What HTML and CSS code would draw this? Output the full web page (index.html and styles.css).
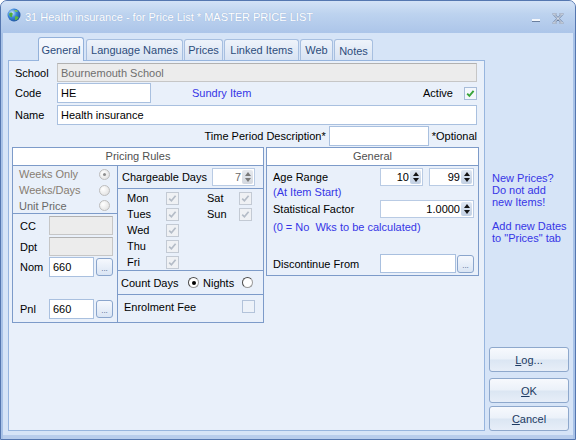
FILE: index.html
```html
<!DOCTYPE html>
<html>
<head>
<meta charset="utf-8">
<link rel="stylesheet" href="styles.css">
</head>
<body>
<div class="window">
  <div class="titlebar">
    <svg class="appicon" width="14" height="14" viewBox="0 0 14 14">
      <defs>
        <radialGradient id="gl" cx="35%" cy="35%" r="75%">
          <stop offset="0" stop-color="#d8ecff"/>
          <stop offset="0.45" stop-color="#3d88d8"/>
          <stop offset="1" stop-color="#1a4b96"/>
        </radialGradient>
      </defs>
      <circle cx="7" cy="7" r="6.5" fill="url(#gl)"/>
      <path d="M2.3 5.6c1.2-1.5 2.9-1.3 3.4-.2.4 1-.8 1.5-.5 2.6.3 1-1 1.6-1.8.8C2.5 8 1.9 6.6 2.3 5.6z" fill="#4fae3b"/>
      <path d="M8 8.6c1-.6 2.7-.4 3.6.6-.4 1.5-1.8 2.8-3.4 3-.6-.9.3-1.6-.2-2.5z" fill="#5cb83f"/>
      <path d="M7.4 2.2c1.3-.3 2.9.2 3.8 1.2-.8.3-1.7 0-2.4.5-.6-.5-1.3-.9-1.4-1.7z" fill="#7cc85a"/>
    </svg>
    <span class="title">31 Health insurance - for Price List * MASTER PRICE LIST</span>
    <span class="minimize"></span>
    <svg class="close" width="12" height="11" viewBox="0 0 12 11">
      <path d="M2 1.5l8 8M10 1.5l-8 8M0.5 1h4M7.5 1h4M0.5 10h4M7.5 10h4" stroke="#6a7f9f" stroke-width="2.2" fill="none"/>
      <path d="M2 1.5l8 8M10 1.5l-8 8M0.5 1h4M7.5 1h4M0.5 10h4M7.5 10h4" stroke="#f4f7fb" stroke-width="1" fill="none"/>
    </svg>
  </div>

  <div class="client">
    <div class="main">
      <div class="tabs">
        <div class="tab active t-gen">General</div>
        <div class="tab t-lang">Language Names</div>
        <div class="tab t-prices">Prices</div>
        <div class="tab t-linked">Linked Items</div>
        <div class="tab t-web">Web</div>
        <div class="tab t-notes">Notes</div>
      </div>

      <div class="panel">
        <div class="row r-school">
          <span class="lbl">School</span>
          <div class="input disabled wide">Bournemouth School</div>
        </div>
        <div class="row r-code">
          <span class="lbl">Code</span>
          <div class="input code">HE</div>
          <span class="blue sundry">Sundry Item</span>
          <span class="active-lbl">Active</span>
          <span class="cb on">
            <svg width="11" height="11" viewBox="0 0 11 11"><path d="M2.2 5.6l2.2 2.2 4.2-5" stroke="#3aa53b" stroke-width="1.9" fill="none"/></svg>
          </span>
        </div>
        <div class="row r-name">
          <span class="lbl">Name</span>
          <div class="input wide">Health insurance</div>
        </div>
        <div class="row r-time">
          <span class="tp-lbl">Time Period Description*</span>
          <div class="input tp"></div>
          <span class="opt">*Optional</span>
        </div>

        <div class="groups">
          <div class="group pricing">
            <div class="ghead">Pricing Rules</div>
            <div class="pbody">
              <div class="pleft">
                <div class="radios">
                  <div class="rrow"><span class="rlbl grey">Weeks Only</span><span class="radio dis sel"></span></div>
                  <div class="rrow"><span class="rlbl grey">Weeks/Days</span><span class="radio dis"></span></div>
                  <div class="rrow last"><span class="rlbl grey2">Unit Price</span><span class="radio dis"></span></div>
                </div>
                <div class="accounts">
                  <div class="arow a-cc"><span class="albl">CC</span><div class="input disabled acc"></div></div>
                  <div class="arow a-dpt"><span class="albl">Dpt</span><div class="input disabled acc"></div></div>
                  <div class="arow a-nom"><span class="albl">Nom</span><div class="input nom">660</div><span class="dots">...</span></div>
                  <div class="arow a-pnl"><span class="albl">Pnl</span><div class="input nom">660</div><span class="dots">...</span></div>
                </div>
              </div>
              <div class="pright">
                <div class="charge">
                  <span>Chargeable Days</span>
                  <div class="spin dspin"><span class="val">7</span><span class="arrows dim"><i class="up"></i><i class="down"></i></span></div>
                </div>
                <div class="days">
                  <div class="drow"><span class="dl">Mon</span><span class="cb dis"><svg width="11" height="11" viewBox="0 0 11 11"><path d="M2.2 5.6l2.2 2.2 4.2-5" stroke="#b4bcc7" stroke-width="1.7" fill="none"/></svg></span><span class="dgap"></span><span class="dl2">Sat</span><span class="cb dis"><svg width="11" height="11" viewBox="0 0 11 11"><path d="M2.2 5.6l2.2 2.2 4.2-5" stroke="#b4bcc7" stroke-width="1.7" fill="none"/></svg></span></div>
                  <div class="drow"><span class="dl">Tues</span><span class="cb dis"><svg width="11" height="11" viewBox="0 0 11 11"><path d="M2.2 5.6l2.2 2.2 4.2-5" stroke="#b4bcc7" stroke-width="1.7" fill="none"/></svg></span><span class="dgap"></span><span class="dl2">Sun</span><span class="cb dis"><svg width="11" height="11" viewBox="0 0 11 11"><path d="M2.2 5.6l2.2 2.2 4.2-5" stroke="#b4bcc7" stroke-width="1.7" fill="none"/></svg></span></div>
                  <div class="drow"><span class="dl">Wed</span><span class="cb dis"><svg width="11" height="11" viewBox="0 0 11 11"><path d="M2.2 5.6l2.2 2.2 4.2-5" stroke="#b4bcc7" stroke-width="1.7" fill="none"/></svg></span></div>
                  <div class="drow"><span class="dl">Thu</span><span class="cb dis"><svg width="11" height="11" viewBox="0 0 11 11"><path d="M2.2 5.6l2.2 2.2 4.2-5" stroke="#b4bcc7" stroke-width="1.7" fill="none"/></svg></span></div>
                  <div class="drow"><span class="dl">Fri</span><span class="cb dis"><svg width="11" height="11" viewBox="0 0 11 11"><path d="M2.2 5.6l2.2 2.2 4.2-5" stroke="#b4bcc7" stroke-width="1.7" fill="none"/></svg></span></div>
                </div>
                <div class="count">
                  <span class="cd-lbl">Count Days</span><span class="radio on sel"></span>
                  <span class="nights">Nights</span><span class="radio on"></span>
                </div>
                <div class="enrol">
                  <span class="en-lbl">Enrolment Fee</span><span class="cb empty"></span>
                </div>
              </div>
            </div>
          </div>

          <div class="group general">
            <div class="ghead">General</div>
            <div class="gbody">
              <div class="grow g-age">
                <span class="glbl">Age Range</span>
                <div class="spin s-age1"><span class="val">10</span><span class="arrows"><i class="up"></i><i class="down"></i></span></div>
                <div class="spin s-age2"><span class="val">99</span><span class="arrows"><i class="up"></i><i class="down"></i></span></div>
              </div>
              <div class="grow g-note1 blue">(At Item Start)</div>
              <div class="grow g-stat">
                <span class="glbl">Statistical Factor</span>
                <div class="spin s-stat"><span class="val">1.0000</span><span class="arrows"><i class="up"></i><i class="down"></i></span></div>
              </div>
              <div class="grow g-note2 blue">(0 = No&nbsp; Wks to be calculated)</div>
              <div class="grow g-disc">
                <span class="glbl">Discontinue From</span>
                <div class="input disc"></div>
                <span class="dots">...</span>
              </div>
            </div>
          </div>
        </div>
      </div>
    </div>

    <div class="side">
      <div class="note blue">New Prices?<br>Do not add<br>new Items!<br><br>Add new Dates<br>to "Prices" tab</div>
      <div class="buttons">
        <button class="btn"><u>L</u>og...</button>
        <button class="btn ok"><u>O</u>K</button>
        <button class="btn cancel"><u>C</u>ancel</button>
      </div>
    </div>
  </div>
</div>
</body>
</html>
```

FILE: styles.css
```css
html, body { margin: 0; padding: 0; }
body {
  width: 576px; height: 440px; overflow: hidden;
  font-family: "Liberation Sans", Arial, sans-serif;
  font-size: 11px; color: #000; background: #fff;
}

.window {
  box-sizing: border-box;
  width: 576px; height: 440px;
  border: 1px solid #5577b0;
  border-radius: 7px 7px 0 0;
  background: #d6e4f7;
  display: flex; flex-direction: column;
  overflow: hidden;
  box-shadow: inset 2px 0 #a8c2e7, inset -2px 0 #a8c2e7, inset 0 -4px #b8cdec;
}

/* title bar */
.titlebar {
  flex: none; height: 32px;
  display: flex; align-items: flex-start;
  background: linear-gradient(#d3e2f6 0%, #bdd3ef 40%, #acc5e9 100%);
}
.appicon { flex: none; margin: 7px 0 0 6px; }
.title { margin: 9px 0 0 4px; line-height: 14px; color: #fff; white-space: nowrap; text-shadow: 0 0 1px #8ea9d0; }
.minimize { flex: none; margin: 18px 0 0 auto; width: 8px; height: 2px; background: #f4f7fb; box-shadow: 0 1px #6a7f9f; }
.close { flex: none; margin: 12px 11px 0 12px; }

/* client */
.client { flex: 1; min-height: 0; display: flex; padding: 0 0 8px 7px; }
.main { flex: none; width: 477px; display: flex; flex-direction: column; }

.tabs { flex: none; height: 27px; display: flex; align-items: flex-end; padding-left: 30px; }
.tab {
  box-sizing: border-box; height: 21px;
  border: 1px solid #a7bfe0; border-bottom: none;
  border-radius: 3px 3px 0 0;
  background: linear-gradient(#eef3fa, #d8e3f3);
  color: #2d4d7c;
  display: flex; align-items: center; justify-content: center;
  margin-left: 1px;
}
.tab.active {
  height: 24px; margin-bottom: -1px; margin-left: 0;
  position: relative;
  background: linear-gradient(#f5f8fd, #e9f0fa);
  border-color: #93b1da;
}
.t-gen { width: 46px; }
.t-lang { width: 97px; margin-left: 2px; }
.t-prices { width: 39px; }
.t-linked { width: 75px; }
.t-web { width: 33px; }
.t-notes { width: 39px; padding-top: 2px; }

.panel {
  flex: 1; box-sizing: border-box;
  border: 1px solid #97b5de;
  background: #e9f0fa;
  padding: 2px 7px 0 3px;
}

.row { display: flex; align-items: center; padding-left: 3px; }
.lbl { width: 42px; flex: none; }
.input {
  box-sizing: border-box; height: 100%;
  border: 1px solid #a9c0df; background: #fff;
  padding: 0 3px;
  display: flex; align-items: center;
  flex: none; white-space: nowrap;
}
.input.disabled { background: #ececec; border-color: #c6c6c6; border-top-color: #b1b1b1; color: #6f6f6f; }
.wide { width: 420px; }
.r-school { height: 19px; }
.r-code { margin-top: 1px; height: 20px; }
.code { width: 94px; }
.blue { color: #3636e6; }
.sundry { margin-left: 41px; }
.active-lbl { margin-left: auto; }
.r-name { margin-top: 2px; height: 20px; }
.r-time { margin-top: 1px; height: 20px; justify-content: flex-end; }
.tp { width: 100px; margin: 0 3px; }

/* checkboxes / radios */
.cb {
  box-sizing: border-box; flex: none;
  width: 13px; height: 13px;
  display: flex; align-items: center; justify-content: center;
}
.cb.on { margin-left: 11px; border: 1px solid #a7bcd9; background: #f3f7fc; }
.cb.dis { border: 1px solid #c3cad4; background: #eff1f4; }
.cb.empty { border: 1px solid #b3c3da; background: #edf2f9; }

.radio {
  box-sizing: border-box; flex: none;
  width: 11px; height: 11px; border-radius: 50%;
  display: flex; align-items: center; justify-content: center;
}
.radio.dis { border: 1px solid #bdbdbd; background: radial-gradient(circle at 35% 35%, #ffffff, #dcdcdc); }
.radio.dis.sel::after { content: ""; width: 3px; height: 3px; border-radius: 50%; background: #8e8e8e; }
.radio.on { border: 1px solid #4a4a4a; border-right-color: #9a9a9a; border-bottom-color: #9a9a9a; background: #fff; }
.radio.on.sel::after { content: ""; width: 4px; height: 4px; border-radius: 50%; background: #000; }

/* groups */
.groups { margin-top: 1px; display: flex; }
.group { box-sizing: border-box; flex: none; border: 1px solid #7d9bc9; display: flex; flex-direction: column; }
.pricing { width: 252px; height: 176px; }
.general { width: 213px; height: 129px; margin-left: 2px; }
.ghead {
  flex: none; height: 17px; line-height: 17px;
  background: #fff; border-bottom: 1px solid #7d9bc9;
  text-align: center; color: #505050;
}

.pbody { flex: 1; display: flex; }
.pleft { width: 104px; flex: none; border-right: 1px solid #7d9bc9; }
.radios { border-bottom: 1px solid #7d9bc9; padding-left: 6px; }
.rrow { height: 16px; display: flex; align-items: center; }
.rrow.last { height: 15px; }
.rlbl { width: 80px; flex: none; }
.grey { color: #877d72; }
.grey2 { color: #686868; }

.accounts { padding-left: 7px; }
.arow { display: flex; align-items: center; }
.albl { width: 29px; flex: none; }
.a-cc { margin-top: 2px; height: 19px; }
.a-dpt { margin-top: 2px; height: 19px; }
.a-nom { margin-top: 1px; height: 20px; }
.a-pnl { margin-top: 22px; height: 20px; }
.acc { width: 64px; }
.nom { width: 45px; }

.dots {
  box-sizing: border-box; flex: none;
  width: 17px; height: 18px; margin-left: 2px;
  border: 1px solid #8aa5cc; border-radius: 3px;
  background: linear-gradient(#f5f8fd, #dae5f4);
  display: flex; align-items: flex-end; justify-content: center;
  font-size: 8px; line-height: 12px; color: #3d5a85;
}

.pright { flex: 1; display: flex; flex-direction: column; }
.charge { height: 22px; flex: none; display: flex; align-items: center; padding-left: 4px; border-bottom: 1px solid #7d9bc9; }
.dspin { margin: 0 8px 0 auto; width: 43px; background: #ececec; border-color: #cdcdcd; color: #6a6a6a; }
.days { height: 80px; flex: none; padding-top: 1px; padding-left: 9px; border-bottom: 1px solid #7d9bc9; }
.drow { height: 16px; display: flex; align-items: center; }
.dl { width: 39px; flex: none; }
.dgap { width: 28px; flex: none; }
.dl2 { width: 32px; flex: none; }
.count { height: 23px; flex: none; display: flex; align-items: center; padding-left: 3px; border-bottom: 1px solid #7d9bc9; }
.cd-lbl { width: 67px; flex: none; }
.nights { width: 39px; flex: none; margin-left: 4px; }
.enrol { height: 23px; flex: none; display: flex; align-items: center; padding-left: 6px; }
.en-lbl { width: 118px; flex: none; }

/* spin */
.spin {
  box-sizing: border-box; flex: none; height: 18px;
  border: 1px solid #b9cbe4; background: #fff;
  display: flex; align-items: stretch;
}
.spin .val { flex: 1; display: flex; align-items: center; justify-content: flex-end; padding-right: 1px; }
.arrows {
  width: 11px; flex: none; margin: 1px 1px 1px 0;
  border-radius: 2px;
  background: linear-gradient(#dfe7f2, #c2d0e3);
  display: flex; flex-direction: column; justify-content: space-evenly; align-items: center;
}
.arrows i { display: block; width: 0; height: 0; border-left: 3.5px solid transparent; border-right: 3.5px solid transparent; }
.arrows .up { border-bottom: 4px solid #141414; }
.arrows .down { border-top: 4px solid #141414; }
.arrows.dim { background: linear-gradient(#e6e9ee, #d3d8df); }
.arrows.dim .up { border-bottom-color: #7a7a7a; }
.arrows.dim .down { border-top-color: #7a7a7a; }

.gbody { padding: 2px 0 0 6px; }
.grow { display: flex; align-items: center; }
.glbl { width: 107px; flex: none; }
.g-age { height: 18px; }
.s-age1 { width: 43px; }
.s-age2 { width: 45px; margin-left: 6px; }
.g-note1 { height: 12px; }
.g-stat { margin-top: 2px; height: 18px; }
.s-stat { width: 94px; }
.g-note2 { height: 18px; }
.g-disc { margin-top: 18px; height: 19px; }
.disc { width: 76px; }
.g-disc .dots { margin-left: 1px; }

/* side */
.side { flex: 1; display: flex; flex-direction: column; padding-left: 4px; }
.note { margin: 139px 0 0 3px; line-height: 12px; }
.buttons { margin-top: auto; display: flex; flex-direction: column; }
.btn {
  box-sizing: border-box; width: 80px; height: 25px; padding: 0;
  border: 1px solid #8ea8cc; border-radius: 3px;
  background: linear-gradient(#f7f9fd 0%, #ebf1f9 48%, #dbe6f3 52%, #e7eef8 100%);
  font: 11px "Liberation Sans", Arial, sans-serif;
  color: #1c3a62;
}
.btn.ok { margin-top: 6px; }
.btn.cancel { margin-top: 3px; }
```
